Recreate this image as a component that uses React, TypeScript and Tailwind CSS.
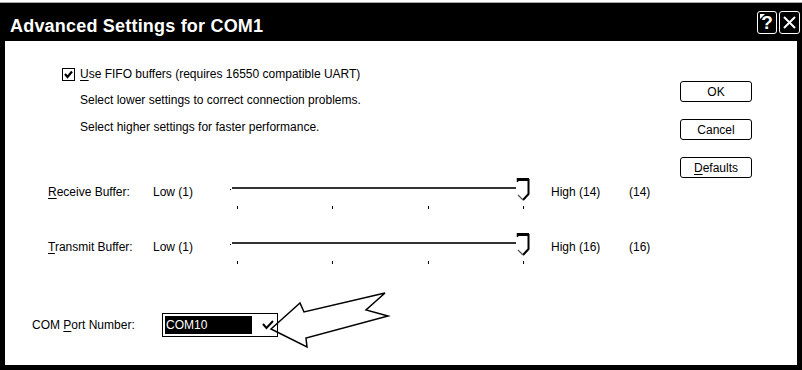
import React from "react";

// Win9x "Advanced Settings for COM1" dialog with a callout arrow
// pointing at the COM port combo box.

function Ul({ children }: { children: string }) {
  return <span className="underline underline-offset-[2px]">{children}</span>;
}

function Thumb() {
  return (
    <svg width="14" height="25" viewBox="0 0 14 25" className="shrink-0">
      <path d="M1 1.5 H13" stroke="#000" strokeWidth="3" />
      <path d="M1.5 0 V4" stroke="#000" strokeWidth="1.5" />
      <path d="M12.5 1 V16 L7 22" stroke="#000" strokeWidth="2" fill="none" />
      <path d="M2 17 L7 22" stroke="#555" strokeWidth="1.2" fill="none" />
    </svg>
  );
}

function Slider() {
  return (
    <div className="flex flex-col w-[300px]">
      <div className="flex items-start h-[25px]">
        <div className="w-[1px] h-[1px] bg-black mt-[11px] mr-[1px]" />
        <div className="flex-1 h-[2px] bg-[#333] mt-[9px]" />
        <Thumb />
      </div>
      <div className="flex justify-between ml-[7px] w-[287px] mt-[3px]">
        <div className="w-[1px] h-[3px] bg-black" />
        <div className="w-[1px] h-[3px] bg-black" />
        <div className="w-[1px] h-[3px] bg-black" />
        <div className="w-[1px] h-[3px] bg-black" />
      </div>
    </div>
  );
}

function SliderRow({ label, ul, high, value }: { label: string; ul: string; high: string; value: string }) {
  return (
    <div className="flex items-start h-[32px] pl-[43px]">
      <div className="w-[105px] mt-[6px] leading-[16px]">
        <Ul>{ul}</Ul>
        {label}
      </div>
      <div className="w-[77px] mt-[6px] leading-[16px]">Low (1)</div>
      <Slider />
      <div className="w-[78px] ml-[21px] mt-[6px] leading-[16px]">{high}</div>
      <div className="mt-[6px] leading-[16px]">{value}</div>
    </div>
  );
}

function DlgButton({ children }: { children: React.ReactNode }) {
  return (
    <button
      type="button"
      className="h-[21px] w-full rounded-[3px] border border-black bg-white text-[12px] leading-none text-black"
    >
      {children}
    </button>
  );
}

export default function App() {
  return (
    <div className="relative w-[802px] h-[370px] bg-white overflow-hidden font-['Liberation_Sans',Arial,sans-serif] text-[12px] text-black">
      <div className="h-[2px] bg-white" />
      <div className="h-[1px] bg-[#aaa]" />
      <div className="flex items-center justify-between h-[38px] bg-black pl-[10px] pr-[2px]">
        <span className="mt-[8px] text-white font-bold text-[18px] tracking-[0.2px]">Advanced Settings for COM1</span>
        <div className="flex gap-[2px]">
          <div className="relative flex items-center justify-center w-[20px] h-[23px] rounded-[3px] border border-white text-white font-bold text-[19px] leading-none">
            ?
            {/* little help-cursor flag */}
            <svg width="6" height="6" viewBox="0 0 6 6" className="absolute left-[2px] top-[2px]">
              <path d="M0 0 H5 L0 5 Z" fill="#fff" />
            </svg>
          </div>
          <div className="flex items-center justify-center w-[21px] h-[23px] rounded-[3px] border border-white">
            <svg width="15" height="15" viewBox="0 0 15 15">
              <path d="M2 2 L13 13 M13 2 L2 13" stroke="#fff" strokeWidth="2" />
            </svg>
          </div>
        </div>
      </div>

      <div className="flex h-[329px] border-x-[5px] border-b-[5px] border-black bg-white">
        <div className="flex-1 flex flex-col">
          <div className="flex items-center h-[16px] mt-[25px] pl-[57px]">
            <div className="flex items-center justify-center w-[13px] h-[13px] border border-black">
              <svg width="9" height="9" viewBox="0 0 9 9">
                <path d="M1 4 L3.5 7 L8 1.5" stroke="#000" strokeWidth="2.2" fill="none" />
              </svg>
            </div>
            <span className="ml-[5px] leading-[16px]">
              <Ul>U</Ul>se FIFO buffers (requires 16550 compatible UART)
            </span>
          </div>
          <div className="pl-[75px] mt-[10px] leading-[16px]">Select lower settings to correct connection problems.</div>
          <div className="pl-[75px] mt-[11px] leading-[16px]">Select higher settings for faster performance.</div>

          <div className="mt-[43px]">
            <SliderRow ul="R" label="eceive Buffer:" high="High (14)" value="(14)" />
          </div>
          <div className="mt-[23px]">
            <SliderRow ul="T" label="ransmit Buffer:" high="High (16)" value="(16)" />
          </div>

          <div className="flex items-center h-[24px] mt-[48px] pl-[27px]">
            <div className="w-[130px] leading-[16px]">
              COM <Ul>P</Ul>ort Number:
            </div>
            <div className="flex items-center w-[116px] h-[24px] border border-black p-[2px]">
              <div className="flex items-center w-[87px] h-full bg-black text-white pl-[1px] leading-none">COM10</div>
              <svg width="12" height="10" viewBox="0 0 12 10" className="ml-[10px]">
                <path d="M1 4 L4.5 8 L11 1" stroke="#000" strokeWidth="2" fill="none" />
              </svg>
            </div>
          </div>
        </div>

        <div className="flex flex-col gap-[17px] w-[72px] mr-[45px] pt-[40px]">
          <DlgButton>OK</DlgButton>
          <DlgButton>Cancel</DlgButton>
          <DlgButton>
            <Ul>D</Ul>efaults
          </DlgButton>
        </div>
      </div>

      {/* callout arrow */}
      <svg className="absolute left-0 top-0 pointer-events-none" width="802" height="370" viewBox="0 0 802 370">
        <polygon
          points="271,329 300,303 304,312 385,293 366,310 388,316 306,338 307,347"
          fill="none"
          stroke="#000"
          strokeWidth="1.5"
          strokeLinejoin="miter"
        />
      </svg>
    </div>
  );
}
